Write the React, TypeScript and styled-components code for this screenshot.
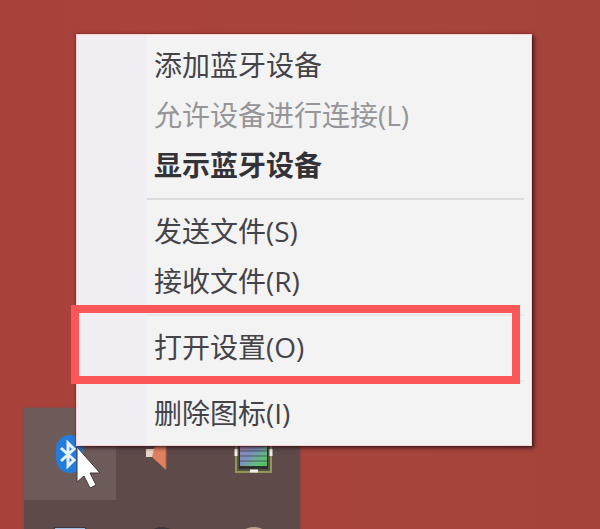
import React from "react";
import styled, { createGlobalStyle } from "styled-components";

const GlobalStyle = createGlobalStyle`
  * { box-sizing: border-box; }
  body {
    margin: 0;
    background: #a7433b;
    font-family: "Open Sans", "Noto Sans CJK SC", sans-serif;
  }
`;

const Desktop = styled.main`
  display: flex;
  flex-direction: column;
  height: 100vh;
  overflow: hidden;
  padding: 34px 68px 0 76px;
  background: linear-gradient(90deg, #a9413b, #a7443b 60%, #a5433b);
`;

const Menu = styled.div`
  position: relative;
  z-index: 1;
  flex: none;
  padding: 6px 0;
  border: 1px solid #f3d3d3;
  background: linear-gradient(90deg, #f1eff3 70px, #f3f3f4 70px);
  box-shadow: 2px 2px 4px rgba(35, 15, 20, 0.75), 0 0 2px rgba(130, 20, 30, 0.8);
`;

const MenuItem = styled.button<{ $strong?: boolean }>`
  display: block;
  width: 100%;
  height: 50px;
  margin: 0;
  padding: 0 0 2px 77px;
  border: 0;
  background: transparent;
  color: ${(p) => (p.$strong ? "#333236" : "#444347")};
  font-family: inherit;
  font-size: 28px;
  font-weight: ${(p) => (p.$strong ? 700 : 400)};
  line-height: 48px;
  text-align: left;
  white-space: nowrap;

  &:disabled { color: #969598; }
`;

const Separator = styled.hr<{ $faint?: boolean }>`
  height: 2px;
  margin: 7px 7px 7px 70px;
  border: 0;
  background: ${(p) => (p.$faint ? "#e7e7e9" : "#dcdcde")};
`;

const Marked = styled.div`
  position: relative;

  &::after {
    content: "";
    position: absolute;
    inset: -18px 11px -11px -6px;
    border: 8px solid #fb5758;
    pointer-events: none;
  }
`;

const Tray = styled.div`
  display: grid;
  grid-template-columns: repeat(3, 92px);
  grid-template-rows: 92px 92px;
  flex: none;
  width: 276px;
  margin: -38px 0 0 -52px;
  background: #5e4b49;
  box-shadow: 0 0 2px 1px #8a4a44;
`;

const TrayButton = styled.button<{ $active?: boolean }>`
  display: flex;
  align-items: center;
  justify-content: center;
  padding: 0;
  border: 0;
  background: ${(p) => (p.$active ? "#6e5c5b" : "transparent")};
`;

const Cursor = styled.svg`
  position: absolute;
  z-index: 2;
  left: 75px;
  top: 444px;
`;

const BluetoothIcon = () => (
  <svg width="30" height="40" viewBox="0 0 30 40" aria-hidden="true">
    <rect x="1" y="1" width="28" height="38" rx="14" fill="#237bdc" />
    <path d="M6 14 L19 26 L13 32 V9 L19 15 L6 27" fill="none" stroke="#e6f3ff" strokeWidth="3" />
  </svg>
);

const SpeakerIcon = () => (
  <svg width="36" height="40" viewBox="0 0 36 40" aria-hidden="true">
    <path d="M8 16 L22 3 V36 L8 23Z" fill="#df8060" />
    <path d="M2 15 H10 L8 23 H2Z" fill="#ead5cb" />
    <path d="M22 4 V35" stroke="#a9664f" strokeWidth="1" />
  </svg>
);

const MonitorIcon = () => (
  <svg width="40" height="40" viewBox="0 0 40 40" aria-hidden="true">
    <defs>
      <linearGradient id="screen" x1="0" y1="0" x2="1" y2="1">
        <stop offset="0" stopColor="#a878a8" />
        <stop offset="0.45" stopColor="#7c8fc0" />
        <stop offset="0.8" stopColor="#5cc474" />
        <stop offset="1" stopColor="#58b855" />
      </linearGradient>
    </defs>
    <rect x="2" y="5" width="35" height="33" fill="#54504a" stroke="#8f9856" strokeWidth="2" />
    <rect x="5" y="7" width="29" height="28" fill="#2c302c" />
    <rect x="6" y="7" width="27" height="25" fill="url(#screen)" />
    <path d="M6 12H33M6 17H33M6 22H33M6 27H33" stroke="#4a5a60" strokeWidth="1" />
    <path d="M2 15V22M37 15V22M16 37H24" stroke="#f2efea" strokeWidth="3" />
  </svg>
);

const WindowIcon = () => (
  <svg width="32" height="38" viewBox="0 0 32 38" aria-hidden="true">
    <rect width="32" height="38" fill="#40383f" />
    <rect x="1" y="1" width="30" height="36" fill="#9fbfe2" />
  </svg>
);

const RoundIcon = ({ color }: { color: string }) => (
  <svg width="38" height="38" viewBox="0 0 38 38" aria-hidden="true">
    <circle cx="19" cy="19" r="19" fill={color} />
  </svg>
);

export default function App() {
  return (
    <>
      <GlobalStyle />
      <Desktop>
        <Menu role="menu">
          <MenuItem role="menuitem">添加蓝牙设备</MenuItem>
          <MenuItem role="menuitem" disabled>允许设备进行连接(L)</MenuItem>
          <MenuItem role="menuitem" $strong>显示蓝牙设备</MenuItem>
          <Separator />
          <MenuItem role="menuitem">发送文件(S)</MenuItem>
          <MenuItem role="menuitem">接收文件(R)</MenuItem>
          <Separator $faint />
          <Marked>
            <MenuItem role="menuitem">打开设置(O)</MenuItem>
          </Marked>
          <Separator $faint />
          <MenuItem role="menuitem">删除图标(I)</MenuItem>
        </Menu>
        <Tray>
          <TrayButton $active aria-label="蓝牙"><BluetoothIcon /></TrayButton>
          <TrayButton aria-label="音量"><SpeakerIcon /></TrayButton>
          <TrayButton aria-label="显示器"><MonitorIcon /></TrayButton>
          <TrayButton aria-label="窗口"><WindowIcon /></TrayButton>
          <TrayButton aria-label="网络"><RoundIcon color="#3d3537" /></TrayButton>
          <TrayButton aria-label="更新"><RoundIcon color="#b99f8a" /></TrayButton>
        </Tray>
        <Cursor width="28" height="46" viewBox="0 0 28 46" aria-hidden="true">
          <path d="M2 3 V38 L9 32 L15 44 L21 41 L15 29 H25Z" fill="#fff" stroke="#41383a" strokeWidth="1" />
        </Cursor>
      </Desktop>
    </>
  );
}
